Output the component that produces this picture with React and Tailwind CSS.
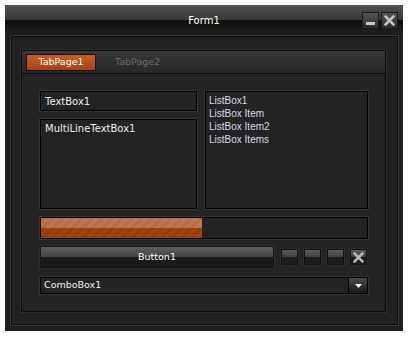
import React from "react";

const F = { fontFamily: '"DejaVu Sans", sans-serif' };

function SmallBtn({ children }) {
  return (
    <div className="relative w-[17px] h-[16px] border border-[#111] shadow-[0_0_0_1px_#2e2e2e] flex flex-col overflow-hidden">
      <div className="h-1/2 bg-gradient-to-b from-[#5c5c5c] to-[#404040]" />
      <div className="h-1/2 bg-[#1e1d1c]" />
      {children}
    </div>
  );
}

function XIcon({ size = 11, color = "#b0b0b0" }) {
  return (
    <svg width={size} height={size} viewBox="0 0 10 10" className="absolute inset-0 m-auto">
      <path d="M1.5 1.5L8.5 8.5M8.5 1.5L1.5 8.5" stroke={color} strokeWidth="2.4" strokeLinecap="square" />
    </svg>
  );
}

export default function App() {
  return (
    <div className="w-[409px] h-[337px] bg-white pt-[5px] pl-[5px]" style={F}>
      <div className="w-[398px] h-[326px] bg-[#1d1d1c] flex flex-col">
        {/* title bar */}
        <div className="relative h-[25px] flex flex-col">
          <div className="h-[15px] bg-gradient-to-b from-[#52504e] to-[#3b3a39]" />
          <div className="h-[10px] bg-gradient-to-b from-[#0e0e0d] to-[#1a1a19]" />
          <div className="absolute inset-x-0 top-[10px] text-center text-[10px] leading-[12px] font-normal text-white">
            Form1
          </div>
          <div className="absolute left-[357px] top-[7px] flex gap-[2px]">
            <div className="relative w-[17px] h-[17px] border border-[#1a1a1a] bg-gradient-to-b from-[#555] to-[#2c2c2c]">
              <div className="absolute left-[3px] right-[3px] bottom-[3px] h-[3px] bg-[#c8c8c8]" />
            </div>
            <div className="relative w-[17px] h-[17px] border border-[#1a1a1a] bg-gradient-to-b from-[#555] to-[#2c2c2c]">
              <XIcon size={11} color="#c4c4c4" />
            </div>
          </div>
        </div>
        {/* body */}
        <div className="flex-1 pt-[5px] pl-[5px] pr-[4px] pb-[5px]">
          <div className="w-full h-full border border-[#393939]">
            <div className="w-full h-full border border-[#0f0f0f] bg-[#212121] pt-[13px] pl-[9px] pr-[11px] pb-[12px]">
              {/* tab control */}
              <div className="w-full h-full border border-[#0c0c0c] shadow-[0_0_0_1px_#2f2f2f] flex flex-col bg-[#242424]">
                <div className="h-[23px] border-b border-[#0c0c0c] bg-gradient-to-b from-[#3a3a3a] via-[#2e2e2e] to-[#282828] flex items-center pl-[4px] gap-[19px]">
                  <div className="w-[70px] h-[17px] border border-[#1a0f08] bg-gradient-to-b from-[#c9602c] to-[#a4420f] flex items-center justify-center text-[9.5px] text-white">
                    TabPage1
                  </div>
                  <div className="text-[9.5px] text-[#6e6e6e]">TabPage2</div>
                </div>
                <div className="flex-1 pt-[17px] pl-[18px] pr-[17px] flex flex-col">
                  <div className="flex gap-[8px] h-[118px]">
                    <div className="w-[157px] flex flex-col gap-[8px]">
                      <div className="h-[20px] border border-black shadow-[0_0_0_1px_#333] bg-[#232323] pl-[4px] flex items-center text-[10px] text-[#e8f0f0]">
                        TextBox1
                      </div>
                      <div className="flex-1 border border-black shadow-[0_0_0_1px_#333] bg-[#232323] pl-[4px] pt-[2px] text-[10px] leading-[13px] text-[#e8f0f0]">
                        MultiLineTextBox1
                      </div>
                    </div>
                    <div
                      className="flex-1 border border-black shadow-[0_0_0_1px_#333] bg-[#232323] pl-[3px] pt-[2px] text-[10px] leading-[13px] text-[#d8d8e8]"
                      style={{ fontFamily: '"Liberation Sans", Arial, sans-serif' }}
                    >
                      <div>ListBox1</div>
                      <div>ListBox Item</div>
                      <div>ListBox Item2</div>
                      <div>ListBox Items</div>
                    </div>
                  </div>
                  {/* progress */}
                  <div className="mt-[8px] h-[22px] border border-black shadow-[0_0_0_1px_#333] bg-[#232323] flex">
                    <div className="relative w-[161px] h-full flex flex-col">
                      <div className="h-1/2 bg-[#bd7750]" />
                      <div className="h-1/2 bg-[#a1410c]" />
                      <div className="absolute inset-0 bg-[repeating-linear-gradient(135deg,rgba(0,0,0,0.07)_0px,rgba(0,0,0,0.07)_3px,transparent_3px,transparent_7px)]" />
                    </div>
                  </div>
                  {/* buttons */}
                  <div className="mt-[7px] h-[22px] flex items-center">
                    <div className="relative w-[234px] h-[22px] border border-[#141414] shadow-[0_0_0_1px_#2e2e2e] flex flex-col">
                      <div className="h-1/2 bg-gradient-to-b from-[#5e5e5e] to-[#444]" />
                      <div className="h-1/2 bg-[#1d1b19]" />
                      <div className="absolute inset-0 flex items-center justify-center text-[9.5px] text-white">
                        Button1
                      </div>
                    </div>
                    <div className="ml-[7px] flex gap-[6px]">
                      <SmallBtn />
                      <SmallBtn />
                      <SmallBtn />
                      <SmallBtn>
                        <XIcon size={11} color="#b8b8b8" />
                      </SmallBtn>
                    </div>
                  </div>
                  {/* combo */}
                  <div className="mt-[9px] h-[17px] border border-black shadow-[0_0_0_1px_#333] bg-[#232323] flex">
                    <div className="flex-1 pl-[3px] flex items-center text-[9.5px] text-[#eef0f0]">
                      ComboBox1
                    </div>
                    <div className="w-[19px] h-full border-l border-black bg-gradient-to-b from-[#4a4a4a] to-[#1a1a1a] flex items-center justify-center">
                      <svg width="7" height="4" viewBox="0 0 7 4">
                        <path d="M0 0H7L3.5 4Z" fill="#f2f2f2" />
                      </svg>
                    </div>
                  </div>
                </div>
              </div>
            </div>
          </div>
        </div>
      </div>
    </div>
  );
}
